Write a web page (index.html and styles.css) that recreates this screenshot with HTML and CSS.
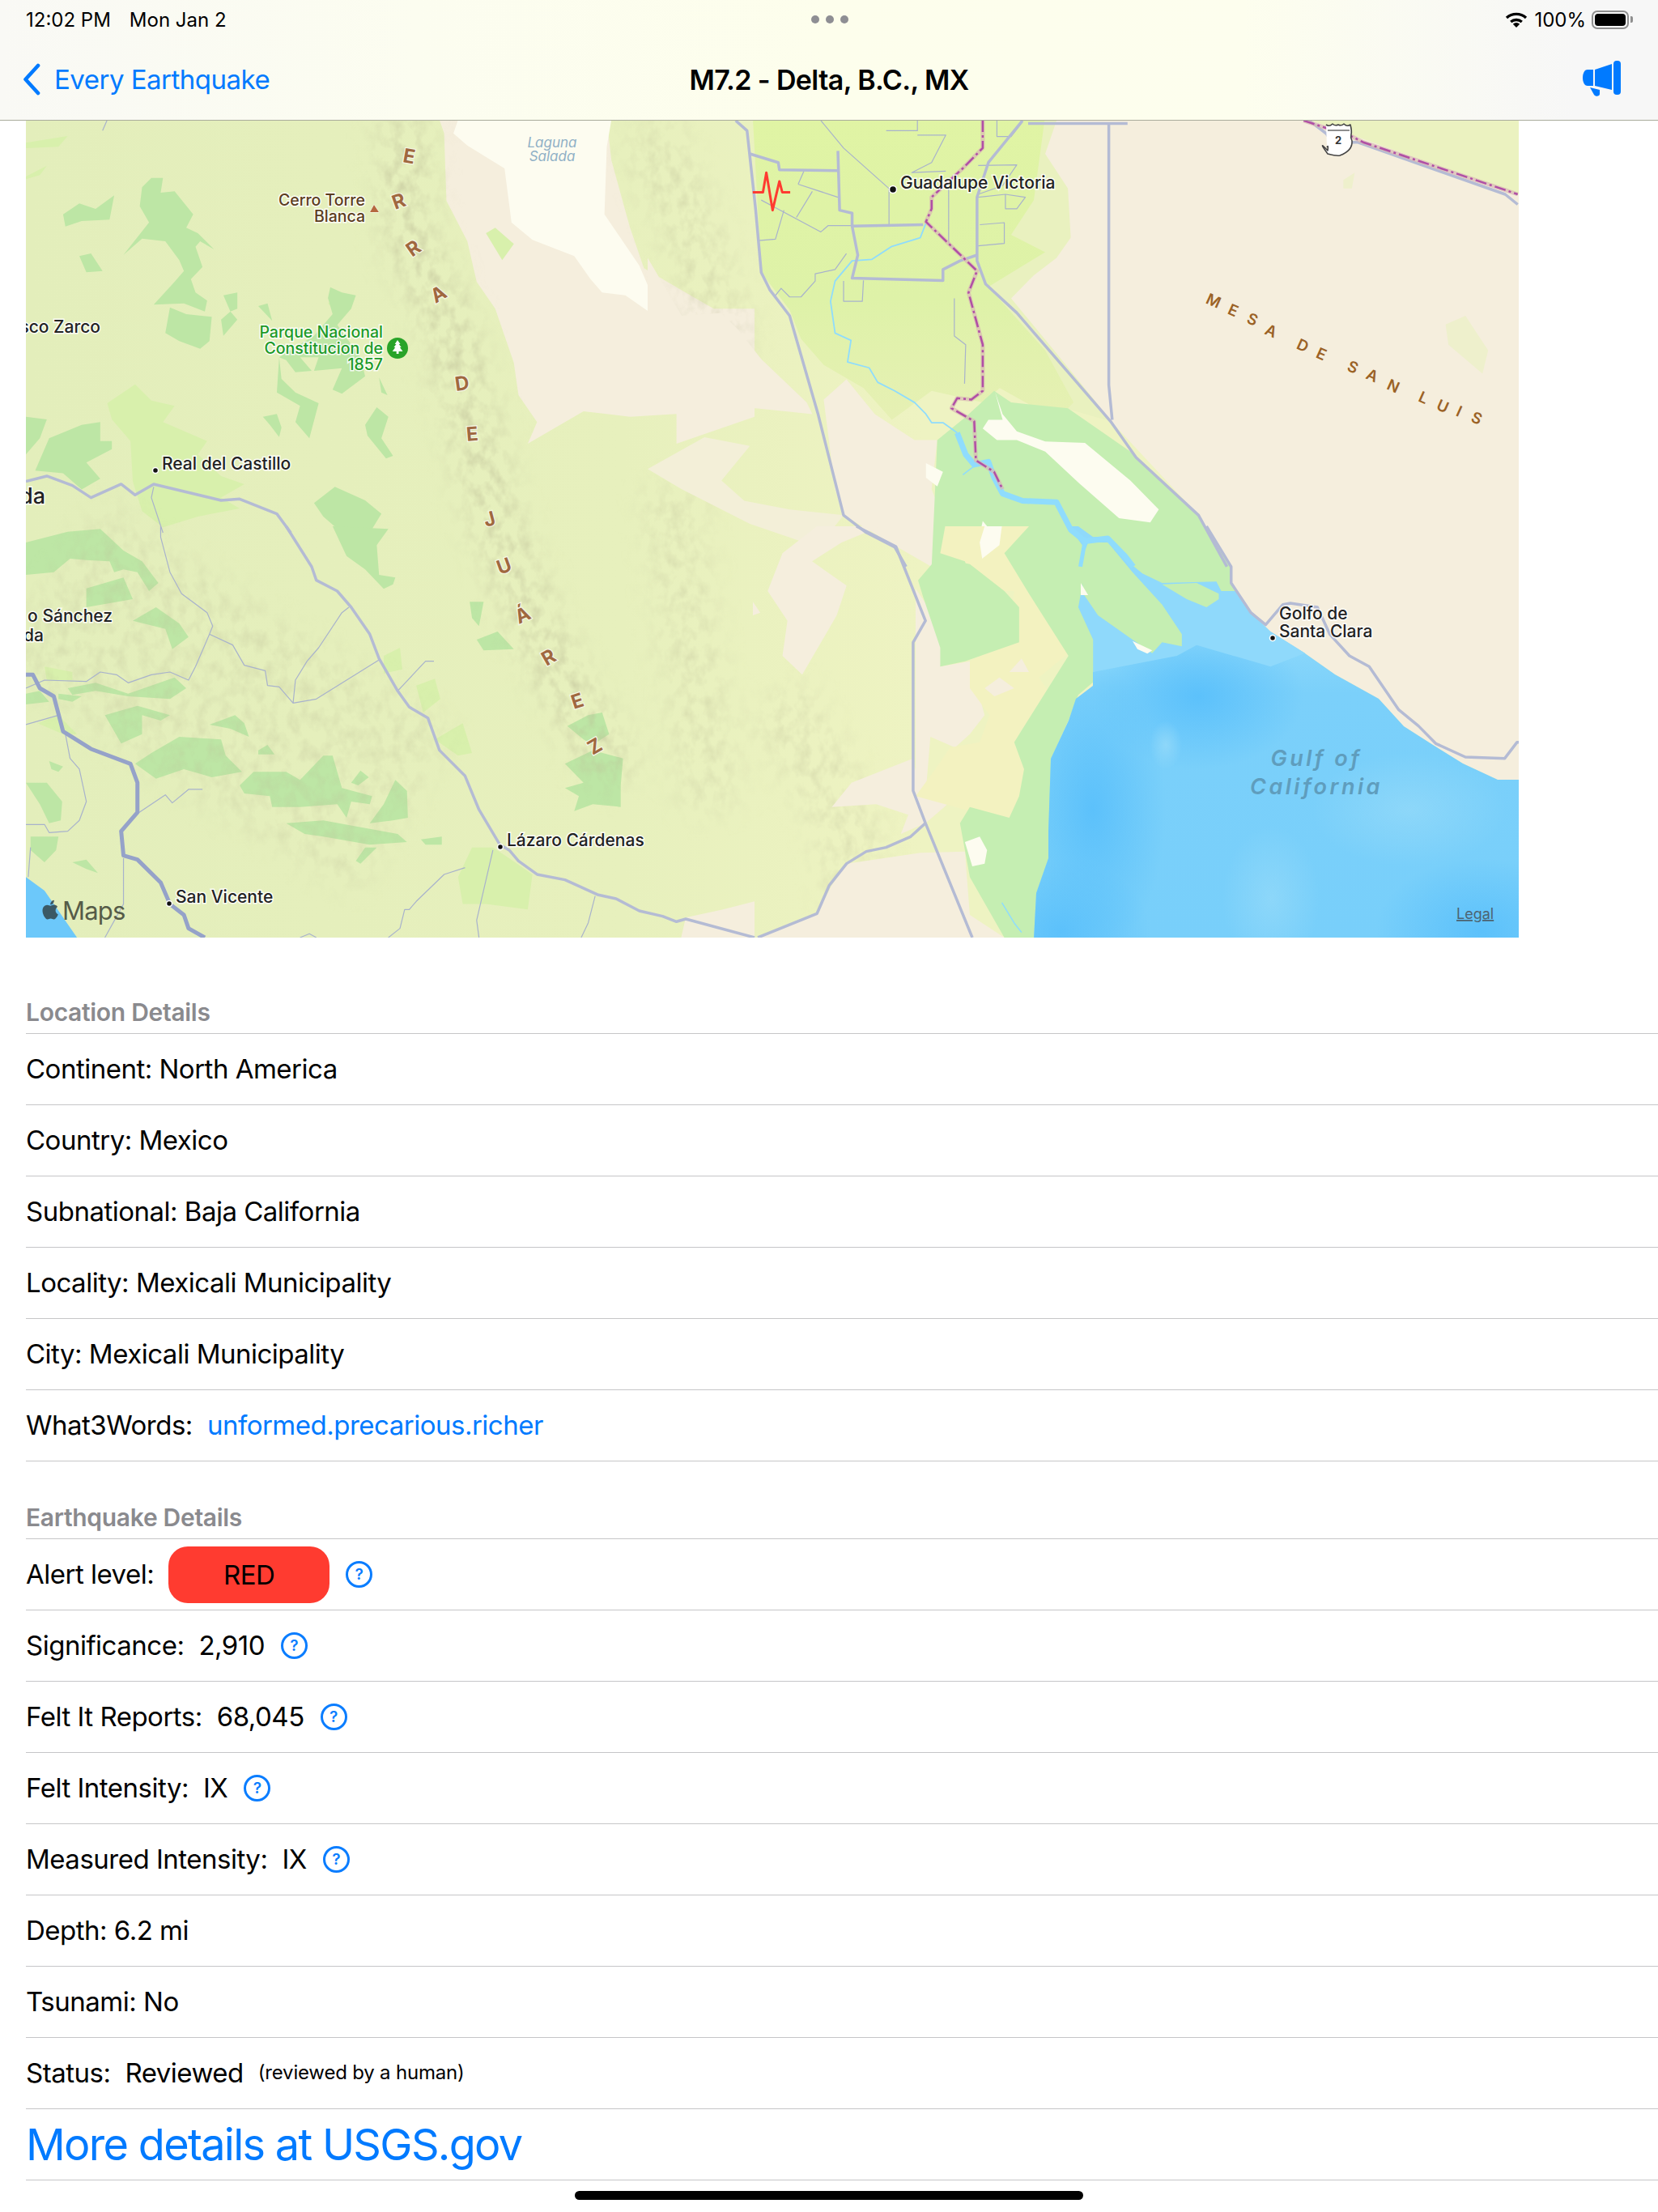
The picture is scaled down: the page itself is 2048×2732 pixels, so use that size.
FILE: index.html
```html
<!DOCTYPE html>
<html lang="en">
<head>
    <meta charset="UTF-8">
    <meta name="viewport" content="width=device-width, initial-scale=1.0">
    <title>M7.2 - Delta, B.C., MX</title>
    <link rel="stylesheet" href="styles.css">
</head>
<body>
    <header class="top-bar">
        <div class="status-bar">
            <div class="status-left">
                <span>12:02 PM</span>
                <span>Mon Jan 2</span>
            </div>
            <div class="status-dots"><i></i><i></i><i></i></div>
            <div class="status-right">
                <svg class="wifi" width="28" height="20" viewBox="0 0 28 20">
                    <path d="M2 8a18 18 0 0 1 24 0M7.2 13a10.6 10.6 0 0 1 13.6 0" fill="none" stroke="#000" stroke-width="3.4"/>
                    <path d="M14 20l-4.2-4.2a6 6 0 0 1 8.4 0z"/>
                </svg>
                <span>100%</span>
                <div class="battery"><div class="battery-level"></div></div>
                <div class="battery-nub"></div>
            </div>
        </div>
        <nav class="nav-bar">
            <a class="back-link">
                <svg width="24" height="40" viewBox="0 0 24 40">
                    <path d="M20 3L4.500 20 20 37" fill="none" stroke="#007aff" stroke-width="4.600" stroke-linecap="round" stroke-linejoin="round"/>
                </svg>
                <span>Every Earthquake</span>
            </a>
            <div class="nav-title">M7.2 - Delta, B.C., MX</div>
            <div class="nav-action">
                <svg width="48" height="46" viewBox="0 0 48 46">
                    <rect x="38" y="0" width="9" height="42" rx="4" fill="#007aff"/>
                    <path d="M15 11L36 4V36L15 31z" fill="#007aff"/>
                    <path d="M13 11V31H6C2 31 0 26 0 21S2 11 6 11z" fill="#007aff"/>
                    <path d="M9 33L21 36V41C21 44 16 45 14 42z" fill="#007aff"/>
                </svg>
            </div>
        </nav>
    </header>

    <main>
        <div class="map">
            <svg width="1844" height="1009" viewBox="32 149 1844 1009">
                <defs>
                    <linearGradient id="land" x1="0" x2="1" y1="0" y2="0">
                        <stop offset="0" stop-color="#e3eebb"/>
                        <stop offset=".4" stop-color="#e7f0bd"/>
                        <stop offset=".6" stop-color="#eef3c2"/>
                        <stop offset="1" stop-color="#eef3c2"/>
                    </linearGradient>
                    <linearGradient id="farm" x1="0" x2="0" y1="0" y2="1">
                        <stop offset="0" stop-color="#e0f4a4"/>
                        <stop offset=".6" stop-color="#def2a8"/>
                        <stop offset="1" stop-color="#e6f0b4"/>
                    </linearGradient>
                    <linearGradient id="open-sea" x1="0" x2="0" y1="0" y2="1">
                        <stop offset="0" stop-color="#90dafb"/>
                        <stop offset=".22" stop-color="#7bd0fa"/>
                        <stop offset="1" stop-color="#78cffa"/>
                    </linearGradient>
                    <radialGradient id="deep">
                        <stop offset="0" stop-color="#5cc1fb"/>
                        <stop offset="1" stop-color="#5cc1fb" stop-opacity="0"/>
                    </radialGradient>
                    <radialGradient id="pale">
                        <stop offset="0" stop-color="#9adcf9"/>
                        <stop offset="1" stop-color="#9adcf9" stop-opacity="0"/>
                    </radialGradient>
                    <clipPath id="sea">
                        <path d="M1350 830L1350 847 1329 863 1320 890 1298 937 1295 1027 1295 1060 1280 1103 1277 1160H1880V963H1850L1807 943 1770 920 1734 897 1703 863 1649 833 1612 807 1569 780 1500 790 1420 800z"/>
                    </clipPath>
                    <filter id="hills" x="0" y="0" width="100%" height="100%">
                        <feTurbulence type="fractalNoise" baseFrequency=".07 .05" numOctaves="3" seed="7"/>
                        <feColorMatrix type="matrix" values="0 0 0 0 .5  0 0 0 0 .5  0 0 0 0 .3  1.800 0 0 0 -.75"/>
                    </filter>
                    <filter id="soft"><feGaussianBlur stdDeviation="18"/></filter>
                    <mask id="ridge">
                        <g filter="url(#soft)" fill="none" stroke="#bbb">
                            <path d="M497 149L505 290 552 400 588 540 612 650 655 760 705 860 765 960" stroke-width="60"/>
                            <path d="M830 600L850 800 880 1000" stroke-width="70" stroke="#666"/>
                            <path d="M800 160L860 300 900 440" stroke-width="70" stroke="#777"/>
                            <path d="M60 720L300 880 500 1000" stroke-width="240" stroke="#555"/>
                            <path d="M960 860L1040 1000 1070 1150" stroke-width="80" stroke="#666"/>
                        </g>
                    </mask>
                </defs>

                <rect x="32" y="149" width="1844" height="1009" fill="url(#land)"/>

                <!-- west desert and lagoon, traced at 32,148 -->
                <g transform="translate(32 148) scale(.574 .3333)">
                    <path class="desert" d="M890 0L900 50 905 300 950 450 970 600 1010 700 1050 900 1060 1020 1100 1120 1080 1200 1200 1080 1300 1100 1400 1090 1400 1200 1568 1100 1568 700 1480 700 1430 650 1330 550 1300 400 1260 150 1250 0z"/>
                    <path class="meadow" d="M990 420L1010 400 1050 460 1025 520z"/>
                    <path class="meadow" d="M175 1050L235 980 270 1040 320 1060 295 1120 390 1190 370 1240 420 1320 470 1350 420 1400 460 1440 370 1470 295 1510 250 1450 230 1340 225 1190 185 1110z"/>
                    <path class="meadow" d="M0 85L90 60 70 100 0 105zM0 210L45 170 30 205 0 220zM650 680L680 640 700 690 680 730z"/>
                    <path class="forest" d="M270 215L295 215 290 270 320 265 360 350 345 400 370 420 405 480 375 450 365 470 380 545 355 590 365 640 390 670 385 710 340 680 275 685 320 600 340 560 330 520 300 450 250 440 210 500 265 380 245 320 250 250z"/>
                    <path class="forest" d="M80 350L115 310 150 330 190 280 180 370 120 375 85 395zM115 505L140 495 165 560 130 565zM310 695L345 720 400 730 395 820 375 848 330 820 300 790zM425 650L455 640 455 700 440 710 455 740 425 800 420 740 440 710zM500 690L520 680 530 745z"/>
                    <path class="forest" d="M655 620L680 640 710 650 700 700 670 760 720 880 730 950 680 1015 660 1000 680 920 620 930 630 880 590 880 615 930 580 935 560 890 545 880 550 960 580 1010 630 1050 610 1180 580 1120 590 1060 540 1010 545 880 620 800 660 720 650 660z"/>
                    <path class="forest" d="M510 1100L540 1090 550 1140 545 1175 525 1130zM760 955L778 1020 765 1010zM755 1065L780 1100 765 1180 790 1245 775 1255 735 1170 730 1130z"/>
                    <path class="forest" d="M0 1100L45 1110 30 1180 0 1240zM120 1130L160 1120 160 1190 185 1190 185 1220 130 1270 160 1330 120 1370 80 1310 20 1300 50 1180zM620 1420L665 1360 730 1410 765 1460 740 1530 680 1530 640 1470z"/>
                </g>

                <!-- southern ranges, traced at 32,650 -->
                <g transform="translate(32 650) scale(.574 .3333)">
                    <path class="desert" d="M1410 1524L1420 1450 1500 1420 1568 1390 1568 1524z"/>
                    <path class="meadow" d="M930 1300L960 1190 1005 1190 1040 1230 1090 1290 1080 1420 990 1400 940 1400zM880 790L940 730 960 840 930 850zM770 480L805 450 810 530 770 545zM840 590L880 565 892 640 855 690zM25 730L70 700 110 770 80 770zM40 520L100 540 100 570 45 570z"/>
                    <path class="forest" d="M660 0L780 10 755 70 760 180 795 190 790 215 770 232 730 160 690 110zM0 60L90 20 160 10 210 90 250 130 285 210 265 240 240 170 210 160 190 170 180 130 130 125 95 120 60 170 0 180zM130 230L210 190 230 270 130 300zM230 350L280 300 330 360 350 410 315 455 300 380z"/>
                    <path class="forest" d="M90 600L150 580 220 620 320 560 345 600 310 640 220 630 150 610 100 625zM70 620L120 630 100 650 70 640zM170 700L240 665 310 700 290 720 250 700 250 770 205 805zM395 735L450 700 470 730 480 780 440 750zM500 830L520 810 535 845 500 845z"/>
                    <path class="forest" d="M235 880L270 840 330 780 420 790 430 850 465 910 400 930 340 900 280 935zM460 960L490 910 560 910 590 940 640 850 660 850 680 970 745 1000 740 1030 700 1020 690 1080 670 1030 590 1040 530 1040 525 1000 470 990zM700 950L720 905 738 930 715 960z"/>
                    <path class="forest" d="M740 1100L770 1030 795 940 820 980 822 1080 790 1090zM560 1100L640 1090 800 1140 820 1170 740 1180 640 1150 600 1140zM850 1160L895 1150 895 1180 860 1180zM710 1240L730 1190 755 1190 720 1250z"/>
                    <path class="forest" d="M1160 880L1220 830 1285 860 1280 960 1280 1040 1220 1030 1180 1055 1190 1000 1160 970 1200 950zM1165 740L1210 700 1240 690 1255 770 1220 810 1200 790zM955 280L985 280 975 370 960 340zM970 420L1015 390 1050 455 985 460z"/>
                    <path class="forest" d="M0 950L45 950 78 1020 75 1090 50 1100 30 1030zM10 1150L70 1150 65 1200 40 1245 10 1200zM100 1245L130 1235 155 1285 130 1270zM0 620L30 610 50 650 0 660zM50 870L80 890 70 910 55 900z"/>
                </g>

                <!-- hill shading, under the lagoon and farms -->
                <rect x="32" y="149" width="1250" height="1009" filter="url(#hills)" mask="url(#ridge)"/>

                <g transform="translate(32 148) scale(.574 .3333)">
                    <path class="salt" d="M930 0L920 50 950 95 1030 180 1045 380 1090 445 1180 505 1215 590 1240 640 1290 650 1340 710 1395 790 1415 785 1410 740 1340 620 1320 540 1245 350 1250 100 1260 0z"/>
                </g>

                <!-- east desert, coast side -->
                <path class="desert" d="M1291 149L1284 229 1263 294 1217 351 1372 520 1480 636 1510 700 1527 730 1545 757 1569 780 1612 807 1649 833 1703 863 1734 897 1770 920 1807 943 1850 963H1876V149z"/>
                <path d="M1620 149H1876V240z" fill="#ebf2c0"/>

                <!-- farmland and wetland, traced at 800,140 -->
                <g transform="translate(800 140) scale(.7015 .3571)">
                    <path class="desert" d="M0 500L60 700 130 690 160 750 200 850 280 1000 290 1040 190 1020 100 1020 0 1040z"/>
                    <path class="desert" d="M310 990L350 920 400 1040 470 1130 510 1130 500 1300 520 1400 500 1568 440 1500 345 1390 330 1300z"/>
                    <path d="M100 1120L180 1150 130 1270 170 1340 250 1370 345 1390 300 1500 180 1420 60 1300 0 1230z" fill="#f3efd8"/>
                    <path class="light" d="M680 25H720L700 140 740 260 745 430 720 500 680 560 640 640 720 830 790 1000 815 1065 700 1000 600 640 600 300z"/>
                    <path d="M185 9H700L680 300 640 420 700 480 600 600 700 820 750 1000 720 1060 620 950 590 1000 500 960 430 1060 380 950 310 870 270 780 250 680 200 550z" fill="url(#farm)"/>
                    <path class="faint" d="M1405 730L1440 700 1480 820 1470 900 1410 800zM1225 230L1245 205 1240 260 1225 260z"/>
                    <path class="wetland" d="M610 960L640 1000 740 1020 850 1170 970 1390 1020 1568H500L510 1130 560 1050z"/>
                    <path class="salt" d="M612 965L625 1040 650 1100 700 1135 770 1140 850 1270 900 1370 885 1415 830 1400 760 1280 700 1170 650 1130 615 1130 590 1090 600 1060 625 1060zM590 1410L620 1480 600 1560 580 1500zM490 1210L520 1240 510 1290 490 1260z"/>
                </g>

                <!-- delta, traced at 930,650 -->
                <g transform="translate(930 650) scale(.609 .3333)">
                    <path class="wetland" d="M640 0H920L970 150V210L1010 320 1050 400 850 480 700 540 640 300z"/>
                    <path class="desert" d="M0 0H130L60 100 30 240 70 350 60 480 100 550 170 330 190 220 120 130 180 60 260 0H0zM0 280L15 320 0 330z"/>
                    <path class="desert" d="M330 230L400 420 380 520 440 500 470 700 440 770 410 820 360 780 350 1000 395 1030 350 1100 300 1140 330 1000z"/>
                    <path class="desert" d="M160 1040L200 950 325 860 340 1000 390 1020 350 1090 250 1030z"/>
                    <path class="desert" d="M190 1250L340 1210 430 1205 440 1440 510 1524H10L130 1435 160 1330z"/>
                    <path d="M390 0H560L620 120 640 470 580 560 610 640 540 760 570 1040 500 1100 430 1050 330 1000 370 900 400 820 460 800 480 700 440 600 440 500 520 420 530 240 450 240 430 130 380 100z" fill="#f3f2c0"/>
                    <path class="wetland" d="M560 0H640L680 100 660 300 690 420 695 570 660 625 640 720 605 860 600 1230 575 1360 570 1524H510L440 1300 420 1100 440 1040 520 1080 540 1000 550 900 530 800 640 480 560 250 510 100z"/>
                    <path class="wetland" d="M335 200L375 115 440 140 510 240 540 300 540 430 430 500 380 520 380 450 345 260z"/>
                    <path class="desert" d="M520 540L545 490 560 540zM470 600L500 560 530 600 490 630z"/>
                    <path class="salt" d="M430 1170L460 1150 475 1200 470 1250 445 1260zM460 60L470 0 505 0 500 70 465 120z"/>
                </g>

                <!-- water -->
                <g clip-path="url(#sea)">
                    <rect x="1260" y="770" width="630" height="390" fill="url(#open-sea)"/>
                    <ellipse cx="1480" cy="860" rx="130" ry="90" fill="url(#deep)"/>
                    <ellipse cx="1350" cy="1000" rx="90" ry="180" fill="url(#deep)"/>
                    <ellipse cx="1310" cy="1150" rx="110" ry="90" fill="url(#deep)"/>
                    <ellipse cx="1830" cy="1150" rx="130" ry="90" fill="url(#deep)"/>
                    <ellipse cx="1440" cy="920" rx="20" ry="30" fill="url(#pale)" opacity=".7"/>
                    <ellipse cx="1570" cy="1110" rx="60" ry="90" fill="url(#pale)" opacity=".6"/>
                    <ellipse cx="1740" cy="1000" rx="120" ry="70" fill="url(#pale)" opacity=".6"/>
                </g>
                <g transform="translate(930 650) scale(.609 .3333)">
                    <path class="shallow" d="M640 0H660L690 40 720 40 760 130 790 175 830 210 940 205 950 240 980 240 1010 320 1050 390 1120 470 1050 520 900 440 860 480 690 540 690 420 660 300 680 100z"/>
                    <path class="wetland" d="M680 60L720 60 770 170 830 290 870 400 870 445 830 430 810 470 770 420 700 330 670 250 665 130z"/>
                    <path class="wetland" d="M830 215L900 210 945 250 945 270 920 300 880 270z"/>
                    <path class="salt" d="M770 425L810 460 800 472 780 455zM665 210L680 255 665 255z"/>
                    <path class="river" d="M505 1395L530 1470 545 1505" stroke-width="1.500"/>
                </g>
                <g transform="translate(32 650) scale(.574 .3333)">
                    <path d="M0 1300L40 1350 60 1400 110 1524H0z" fill="#6cc8fa"/>
                </g>

                <!-- rivers -->
                <g transform="translate(800 140) scale(.7015 .3571)">
                    <path class="river" d="M490 380L480 430 430 460 395 505 360 510 330 580 322 650 330 760 358 785 352 860 390 880 405 930 435 960 470 1000 490 1040 500 1070 520 1070 545 1105" stroke-width="1.800"/>
                    <path class="river" d="M545 1105L560 1180 575 1215 600 1205 610 1260 625 1315 660 1340 720 1345 745 1440 770 1480 810 1470 840 1530 855 1568" stroke-width="7"/>
                    <path class="river" d="M575 1220L555 1250" stroke-width="1.500"/>
                    <path class="river" d="M770 1480L762 1568" stroke-width="5"/>
                </g>

                <!-- thin roads -->
                <g transform="translate(800 140) scale(.7015 .3571)" class="thin-roads">
                    <path d="M305 25L345 120 425 260 425 385M475 25V60H420M475 75H525L500 170 465 205 525 200M530 260V450L550 490M615 25V80H640L660 30M585 385L628 378V450L582 458M582 290L630 280 665 290 650 330H630V280M582 180L650 178 625 250 582 280M265 245L275 200M265 245L335 290M290 270L262 360M200 300L305 410 318 388H360M240 335L225 435 195 440M345 580V650H378L380 578M350 485L330 540 295 555V580L270 635H250L235 605 225 630M540 640V770L560 800 558 935"/>
                </g>
                <g transform="translate(32 148) scale(.574 .3333)" class="thin-roads">
                    <path d="M175 0L165 40M275 1360L270 1400 295 1530"/>
                </g>
                <g transform="translate(32 650) scale(.574 .3333)" class="thin-roads">
                    <path d="M290 0V40L310 170 335 250 390 320 402 370 395 400 365 520 350 570 310 540 270 550 220 580 195 550 160 540 130 575 40 570 0 600M395 400L445 440 470 515 515 535 520 590 545 595 575 655 625 640 760 495M575 655L580 570 605 500 630 450 680 320 695 300M800 610L860 500H878M0 735L70 700M85 770L95 860 115 900 130 1020 115 1090 90 1130 50 1135 40 1105H0M10 1190L5 1300M210 1230L210 1400 170 1524M235 1070L300 995 315 1025 350 975H380M1005 1200L970 1460 975 1524M945 1265L900 1290 840 1390 825 1420H815L805 1490 780 1524M1225 1370L1210 1470 1195 1524M590 1524L610 1510 625 1524"/>
                </g>

                <!-- main roads -->
                <g transform="translate(800 140) scale(.7015 .3571)" class="roads">
                    <path d="M155 25L175 60 190 330 200 550 215 610 250 700 300 1040 345 1390 385 1450 435 1500 455 1568"/>
                    <path d="M660 25L600 170 580 290V510L595 590 650 690 815 1065 860 1190 970 1390 1020 1568"/>
                    <path d="M670 35H845M812 30V940L818 1060"/>
                    <path d="M180 140L230 170 232 195 335 198M335 130L338 335 360 345V390L485 385M360 390L370 490 360 570 520 578V540L550 510 580 490"/>
                    <path d="M1165 25L1195 70 1205 100H1250L1510 280 1532 315"/>
                </g>
                <g transform="translate(930 650) scale(.609 .3333)" class="roads">
                    <path d="M210 0L290 75 350 350 325 430V980L350 1100 445 1524"/>
                    <path d="M350 1100L320 1150 270 1190 230 1205 190 1250 155 1330 130 1435 10 1524"/>
                    <path d="M920 0L970 150V210L1010 320 1040 365 1075 290 1090 285 1145 300 1170 400 1210 480 1250 520 1310 680 1350 740 1385 805 1445 855 1525 860 1550 800H1560"/>
                </g>
                <g transform="translate(32 650) scale(.574 .3333)" class="roads">
                    <path d="M1568 1524L1420 1455 1400 1465 1370 1445 1320 1425 1270 1380 1230 1365 1160 1310 1100 1290 1060 1240 1040 1200 1020 1180 975 1050 945 925 890 830 865 710 825 670 800 610 760 490 740 400 700 300 670 240 625 200 615 150 560 0"/>
                    <path class="road-major" d="M0 550H15L30 600 60 630 80 760 140 825 225 880 240 950V1060L205 1130 210 1220 240 1235 290 1320 310 1400 340 1440 350 1490 385 1524"/>
                </g>
                <g transform="translate(32 148) scale(.574 .3333)" class="roads">
                    <path d="M570 1530L540 1460 460 1405 420 1410 275 1350 235 1390 205 1350 140 1400 100 1355 45 1320 0 1340"/>
                </g>

                <!-- state border -->
                <g transform="translate(800 140) scale(.7015 .3571)">
                    <path class="border-band" d="M590 25V120L555 190 500 290V330L490 375 580 545 565 620 590 800V960L570 990 545 985 535 1020 575 1065 578 1200 610 1240 625 1300"/>
                    <path class="border-line" d="M590 25V120L555 190 500 290V330L490 375 580 545 565 620 590 800V960L570 990 545 985 535 1020 575 1065 578 1200 610 1240 625 1300"/>
                    <path class="border-band" d="M1155 25L1240 80 1260 100 1510 265 1532 280"/>
                    <path class="border-line" d="M1155 25L1240 80 1260 100 1510 265 1532 280"/>
                </g>

                <!-- quake marker -->
                <g transform="translate(800 140) scale(.7015 .3571)">
                    <path class="pulse" d="M185 273H203L209 205 220 335 232 235 237 273H251"/>
                </g>

                <!-- highway shield -->
                <path d="M1638 154q4 3 8-1 3 3 7 1 4 2 7-1 4 4 8 1 2 8 1 12-1 4 1 8 1 12-15 18-3 1-15-2-13-18 0-4 1-8-1-4 1-12z" fill="#fff" stroke="#444" stroke-width="1.600"/>
                <path d="M1640 161H1667" stroke="#444" stroke-width="1.200"/>
                <text class="shield-num" x="1653" y="178">2</text>

                <!-- labels -->
                <text class="label" x="1112" y="233">Guadalupe Victoria</text>
                <circle class="town" cx="1103" cy="234" r="4.500"/>
                <text class="label peak" x="451" y="254" text-anchor="end">Cerro Torre</text>
                <text class="label peak" x="451" y="274" text-anchor="end">Blanca</text>
                <path d="M457 262L462 253 468 262z" fill="#b5683f" stroke="#fff" stroke-width="1" paint-order="stroke"/>
                <text class="label park" x="473" y="417" text-anchor="end">Parque Nacional</text>
                <text class="label park" x="473" y="437" text-anchor="end">Constitucion de</text>
                <text class="label park" x="473" y="457" text-anchor="end">1857</text>
                <circle cx="491" cy="430" r="13" fill="#29a329"/>
                <path d="M491 420l3.500 5h-1.800l3 4h-1.800l3.600 5h-5v3h-2.800v-3h-5l3.600-5h-1.800l3-4h-1.800z" fill="#fff"/>
                <text class="label" x="124" y="411" text-anchor="end">sco Zarco</text>
                <text class="label" x="200" y="580">Real del Castillo</text>
                <circle class="town" cx="192" cy="581" r="3.500"/>
                <text class="label label-big" x="56" y="622" text-anchor="end">da</text>
                <text class="label" x="139" y="768" text-anchor="end">o Sánchez</text>
                <text class="label" x="54" y="792" text-anchor="end">da</text>
                <text class="label" x="626" y="1045">Lázaro Cárdenas</text>
                <circle class="town" cx="618" cy="1046" r="3.500"/>
                <text class="label" x="217" y="1115">San Vicente</text>
                <circle class="town" cx="209" cy="1116" r="3.500"/>
                <text class="label" x="1580" y="765">Golfo de</text>
                <text class="label" x="1580" y="787">Santa Clara</text>
                <circle class="town" cx="1572" cy="788" r="3.500"/>
                <text class="gulf" x="1626" y="946">Gulf of</text>
                <text class="gulf" x="1626" y="981">California</text>
                <text class="lagoon" x="682" y="182">Laguna</text>
                <text class="lagoon" x="682" y="199">Salada</text>
                <text class="ridge-name" x="504 496 517 547 560 572 584 596 607 626 650 683 716 740" y="200 259 318 375 420 483 545 590 651 710 771 823 876 933" rotate="10 -20 -35 -30 0 -8 -5 0 -15 -20 -25 -30 -18 -30">ERRA DE JUÁREZ</text>
                <text class="mesa-name" x="1497 1521 1545 1568 1587 1607 1630 1650 1669 1693 1719 1738 1756 1780 1800 1822" y="374 387 398 412 421 430 441 449 457 467 480 488 495 505 513 520" rotate="24">MESA DE SAN LUIS</text>

                <text class="legal" x="1799" y="1135">Legal</text>
                <path class="apple" transform="translate(49 1110) scale(1.150)" d="M17.050 12.540c-.03-2.600 2.120-3.850 2.220-3.910-1.210-1.770-3.090-2.010-3.760-2.040-1.600-.16-3.120.94-3.930.94-.81 0-2.070-.92-3.400-.89-1.750.03-3.360 1.020-4.260 2.580-1.820 3.150-.46 7.820 1.300 10.380.87 1.250 1.900 2.650 3.250 2.600 1.310-.05 1.800-.84 3.380-.84s2.020.84 3.400.82c1.410-.03 2.300-1.270 3.150-2.530.99-1.450 1.400-2.860 1.420-2.930-.03-.01-2.730-1.050-2.770-4.180zM14.460 4.900c.72-.87 1.200-2.080 1.070-3.280-1.030.04-2.280.69-3.020 1.550-.66.77-1.240 2-1.090 3.180 1.150.09 2.330-.59 3.040-1.450z"/>
                <text class="maps-mark" x="77" y="1136">Maps</text>
            </svg>
        </div>

        <section>
            <h2 class="section-title">Location Details</h2>
            <ul class="detail-list">
                <li class="detail-row">Continent: North America</li>
                <li class="detail-row">Country: Mexico</li>
                <li class="detail-row">Subnational: Baja California</li>
                <li class="detail-row">Locality: Mexicali Municipality</li>
                <li class="detail-row">City: Mexicali Municipality</li>
                <li class="detail-row"><span>What3Words:</span><a class="link">unformed.precarious.richer</a></li>
            </ul>
        </section>

        <section>
            <h2 class="section-title">Earthquake Details</h2>
            <ul class="detail-list">
                <li class="detail-row"><span>Alert level:</span><span class="alert-pill">RED</span><span class="help">?</span></li>
                <li class="detail-row"><span>Significance:</span><span>2,910</span><span class="help">?</span></li>
                <li class="detail-row"><span>Felt It Reports:</span><span>68,045</span><span class="help">?</span></li>
                <li class="detail-row"><span>Felt Intensity:</span><span>IX</span><span class="help">?</span></li>
                <li class="detail-row"><span>Measured Intensity:</span><span>IX</span><span class="help">?</span></li>
                <li class="detail-row">Depth: 6.2 mi</li>
                <li class="detail-row">Tsunami: No</li>
                <li class="detail-row"><span>Status:</span><span>Reviewed</span><span class="note">(reviewed by a human)</span></li>
                <li class="detail-row"><a class="link link-large">More details at USGS.gov</a></li>
            </ul>
        </section>
    </main>

    <div class="home-indicator"></div>
</body>
</html>
```

FILE: styles.css
```css
body {
    margin: 0;
    background-color: white;
    color: black;
    font-family: Inter, "Liberation Sans", sans-serif;
}

.top-bar {
    height: 148px;
    border-bottom: 1px solid #a9ab9c;
    background: linear-gradient(90deg, #f9f9f5 0%, #fcfdf0 25%, #fdfeec 50%, #fdfeee 75%, #f7f7f7 95%);
}
.status-bar {
    height: 48px;
    padding: 0 31px 0 32px;
    display: grid;
    grid-template-columns: 1fr auto 1fr;
    align-items: center;
    font-size: 24px;
}
.status-left {
    display: flex;
    gap: 23px;
}
.status-dots {
    display: flex;
    gap: 8px;
}
.status-dots i {
    width: 10px;
    height: 10px;
    border-radius: 50%;
    background-color: #8e8e93;
}
.status-right {
    display: flex;
    justify-content: flex-end;
    align-items: center;
    gap: 7px;
}
.wifi {
    margin-right: 1px;
}
.battery {
    width: 46px;
    height: 23px;
    box-sizing: border-box;
    padding: 2px;
    border: 2px solid #8f8f8f;
    border-radius: 7px;
}
.battery-level {
    height: 100%;
    border-radius: 4px;
    background-color: black;
}
.battery-nub {
    width: 3px;
    height: 8px;
    margin-left: -5px;
    border-radius: 0 2px 2px 0;
    background-color: #8f8f8f;
}

.nav-bar {
    height: 100px;
    padding: 0 45px;
    display: grid;
    grid-template-columns: 1fr auto 1fr;
    align-items: center;
    box-sizing: border-box;
}
.back-link {
    display: flex;
    align-items: center;
    gap: 16px;
    margin-left: -18px;
    color: #007aff;
    font-size: 33px;
    letter-spacing: -.5px;
}
.nav-title {
    font-size: 34px;
    font-weight: 600;
    letter-spacing: -.6px;
}
.nav-action {
    display: flex;
    justify-content: flex-end;
}

.map {
    width: 1844px;
    height: 1009px;
    margin: 0 0 23px 32px;
    overflow: hidden;
}
.map svg {
    display: block;
}
.map path {
    stroke-linejoin: round;
}
.desert { fill: #f5eedd; }
.salt { fill: #fdfcf0; }
.meadow { fill: #d8f0ac; }
.forest { fill: #bde6a5; }
.light { fill: #e9f1bf; }
.faint { fill: #eef0cc; }
.wetland { fill: #c5eeb2; }
.shallow { fill: #8fd9fb; }
.river {
    fill: none;
    stroke: #8fdcfd;
    vector-effect: non-scaling-stroke;
}
.roads path {
    fill: none;
    stroke: #b4bbd4;
    stroke-width: 3.500px;
    vector-effect: non-scaling-stroke;
}
.roads .road-major {
    stroke: #95a2c9;
    stroke-width: 5px;
}
.thin-roads path {
    fill: none;
    stroke: #a8b2cc;
    stroke-width: 1.200px;
    vector-effect: non-scaling-stroke;
}
.border-band {
    fill: none;
    stroke: #d9b8b4;
    stroke-width: 5px;
    opacity: .7;
    vector-effect: non-scaling-stroke;
}
.border-line {
    fill: none;
    stroke: #b04fa5;
    stroke-width: 2.500px;
    stroke-dasharray: 14 4 3 4;
    vector-effect: non-scaling-stroke;
}
.pulse {
    fill: none;
    stroke: #ff3b30;
    stroke-width: 3px;
    vector-effect: non-scaling-stroke;
}
.town { fill: #111; stroke: white; stroke-width: 1.500px; }
.label {
    font-size: 21px;
    font-weight: 500;
    fill: #222;
    stroke: rgba(255, 255, 255, .85);
    stroke-width: 3px;
    paint-order: stroke;
}
.peak { fill: #5c3d20; font-size: 19.500px; }
.park { fill: #1d9a28; font-size: 19.500px; }
.label-big { font-size: 27px; }
.shield-num {
    font-size: 13px;
    font-weight: 700;
    text-anchor: middle;
    fill: #333;
}
.gulf {
    font-size: 27px;
    font-weight: 600;
    font-style: italic;
    letter-spacing: 3.500px;
    text-anchor: middle;
    fill: #5f9dbd;
}
.lagoon {
    font-size: 17px;
    font-style: italic;
    text-anchor: middle;
    fill: #8fb0c6;
}
.ridge-name {
    font-size: 24px;
    font-weight: 700;
    text-anchor: middle;
    fill: #a0683f;
    stroke: #f4f6e4;
    stroke-width: 2.500px;
    paint-order: stroke;
}
.mesa-name {
    font-size: 19px;
    font-weight: 600;
    text-anchor: middle;
    fill: #9b6226;
}
.legal {
    font-size: 18px;
    fill: #4d6472;
    text-decoration: underline;
}
.apple { fill: #33454a; opacity: .85; }
.maps-mark {
    font-size: 31px;
    fill: #565c48;
    letter-spacing: -.8px;
}

.section-title {
    height: 95px;
    margin: 0 0 0 32px;
    box-sizing: border-box;
    padding-bottom: 8px;
    display: flex;
    align-items: flex-end;
    color: #8a8a8e;
    font-size: 30px;
    font-weight: 600;
    letter-spacing: -.3px;
}
.detail-list {
    list-style: none;
    margin: 0 0 0 32px;
    padding: 0;
    border-top: 1px solid #c6c6c8;
}
.detail-row {
    height: 85px;
    padding-bottom: 2px;
    border-bottom: 1px solid #c6c6c8;
    display: flex;
    align-items: center;
    gap: 18px;
    font-size: 33px;
    letter-spacing: -.5px;
}
.link {
    color: #007aff;
}
.link-large {
    margin-top: 2px;
    font-size: 54px;
    letter-spacing: -1.700px;
}
.alert-pill {
    width: 199px;
    height: 70px;
    margin-top: 2px;
    border-radius: 24px;
    background-color: #ff3b30;
    display: flex;
    align-items: center;
    justify-content: center;
}
.help {
    width: 33px;
    height: 33px;
    box-sizing: border-box;
    margin: 2px 0 0 2px;
    border: 3px solid #0a7dff;
    border-radius: 50%;
    display: flex;
    align-items: center;
    justify-content: center;
    color: #0a7dff;
    font-size: 19px;
    font-weight: 600;
    letter-spacing: 0;
}
.note {
    font-size: 24px;
    letter-spacing: -.2px;
}

.home-indicator {
    position: fixed;
    left: 710px;
    top: 2706px;
    width: 628px;
    height: 11px;
    border-radius: 6px;
    background-color: black;
}
```
